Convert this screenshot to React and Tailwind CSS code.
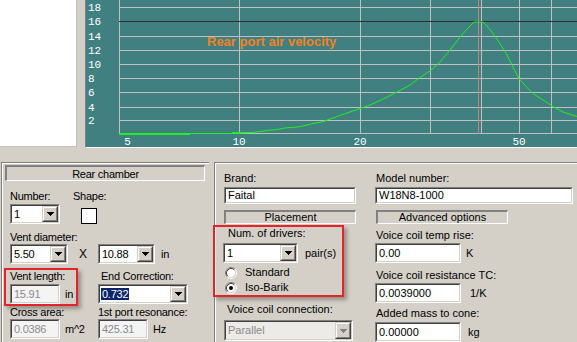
import React from 'react'

const hGrid = [7, 21, 36, 50, 64, 78, 92, 107, 120, 133]
const vGrid = [119, 239, 360, 430, 481, 519, 551]
const yLabels = ['18', '16', '14', '12', '10', '8', '6', '4', '2']
const xLabels = [['5', 127.5], ['10', 239], ['20', 360], ['50', 519]]
const curve =
  '119,133.5 232,133.5 252,132.5 267,130.5 277,129.5 285,128 297,127 303,126 313,123.5 322,122 330,119 340,115.5 350,112 360,108.5 370,105 380,100.5 390,95.5 400,90.5 410,85 420,77.5 430,71 440,62 450,50 460,37 470,26 474,22 483,22 487,26 493,33.5 500,43.5 507,55 513,67 519,78.5 527,87.5 533,93.5 543,100 552,106 563,112 577,116.5'

function Chart() {
  return (
    <svg width="491" height="147" className="block">
      <g transform="translate(-86 0)">
        {hGrid.map(y => (
          <line key={y} x1="119" x2="577" y1={y + 0.5} y2={y + 0.5} stroke="#c0c0c0" />
        ))}
        {vGrid.map(x => (
          <line key={x} x1={x + 0.5} x2={x + 0.5} y1="0" y2="134" stroke="#c0c0c0" />
        ))}
        <line x1="119" x2="577" y1="21.5" y2="21.5" stroke="#303030" />
        <rect x="478" y="0" width="1" height="134" fill="#c88080" />
        <line x1="119" x2="190" y1="134.5" y2="134.5" stroke="#22ee22" />
        <line x1="232" x2="252" y1="132.5" y2="132.5" stroke="#22ee22" />
        <polyline points={curve} fill="none" stroke="#22ee22" strokeWidth="1" />
        {yLabels.map((t, i) => (
          <text key={t} x="88" y={hGrid[i] + 4} fill="#fff" fontSize="11" fontFamily="'Liberation Mono', monospace">
            {t}
          </text>
        ))}
        {xLabels.map(([t, x]) => (
          <text key={t} x={x} y="145" fill="#fff" fontSize="11" textAnchor="middle" fontFamily="'Liberation Mono', monospace">
            {t}
          </text>
        ))}
        <text x="207" y="45.5" fill="#f58220" fontSize="13" fontWeight="bold" fontFamily="'Liberation Sans', Arial, sans-serif">
          Rear port air velocity
        </text>
      </g>
    </svg>
  )
}

function Label({ className = '', children }) {
  return <div className={`h-[13px] whitespace-nowrap text-[11px] leading-[13px] ${className}`}>{children}</div>
}

function Field({ className = '', value, disabled }) {
  return (
    <div className={`border border-t-[#808080] border-l-[#808080] border-r-white border-b-white ${className}`}>
      <div
        className={`flex h-full items-center border border-t-[#404040] border-l-[#404040] border-r-[#d4d0c8] border-b-[#d4d0c8] pl-[2px] text-[11px] leading-[13px] ${
          disabled ? 'bg-[#f4f4f4] text-[#8a8a8a]' : 'bg-white text-black'
        }`}
      >
        {value}
      </div>
    </div>
  )
}

function DropButton({ disabled }) {
  return (
    <div className="h-full w-[16px] border border-t-[#d4d0c8] border-l-[#d4d0c8] border-r-[#404040] border-b-[#404040] bg-[#d4d0c8]">
      <div className="flex h-full items-center justify-center border border-t-white border-l-white border-r-[#808080] border-b-[#808080]">
        <svg width="7" height="4" viewBox="0 0 7 4">
          <path d="M0 0H7V1H6V2H5V3H4V4H3V3H2V2H1V1H0Z" fill={disabled ? '#808080' : '#000'} />
        </svg>
      </div>
    </div>
  )
}

function Combo({ className = '', value, disabled, selected }) {
  return (
    <div className={`border border-t-[#808080] border-l-[#808080] border-r-white border-b-white ${className}`}>
      <div
        className={`flex h-full border border-t-[#404040] border-l-[#404040] border-r-[#d4d0c8] border-b-[#d4d0c8] ${
          disabled ? 'bg-[#ecebe8] text-[#8a8a8a]' : 'bg-white text-black'
        }`}
      >
        <div className="flex flex-1 items-center pl-[2px] text-[11px] leading-[13px]">
          {selected ? <span className="-ml-[1px] bg-[#0a246a] px-[1px] leading-[12px] text-white">{value}</span> : value}
        </div>
        <DropButton disabled={disabled} />
      </div>
    </div>
  )
}

function Bar({ className = '', children }) {
  return (
    <div className={`h-[14px] border-t-2 border-l-2 border-b border-r border-t-[#808080] border-l-[#808080] border-b-white border-r-white bg-[#d4d0c8] ${className}`}>
      <div className="flex justify-center whitespace-nowrap text-[11px] leading-[11px]">{children}</div>
    </div>
  )
}

function Radio({ checked }) {
  return (
    <svg width="12" height="12" viewBox="0 0 12 12" className="shrink-0">
      <circle cx="6" cy="6" r="4.5" fill="#fff" />
      <path d="M2.11 9.89A5.5 5.5 0 0 1 9.89 2.11" fill="none" stroke="#808080" />
      <path d="M9.89 2.11A5.5 5.5 0 0 1 2.11 9.89" fill="none" stroke="#fff" />
      <path d="M2.82 9.18A4.5 4.5 0 0 1 9.18 2.82" fill="none" stroke="#404040" />
      <path d="M9.18 2.82A4.5 4.5 0 0 1 2.82 9.18" fill="none" stroke="#d4d0c8" />
      {checked && <circle cx="6" cy="6" r="2" fill="#000" />}
    </svg>
  )
}

function RearChamber() {
  return (
    <div className="ml-[1px] w-[208px] border-t border-l border-[#808080]">
      <div className="h-[180px] border-t border-l border-white tracking-[-0.25px]">
        <div className="ml-[2px] mt-[1px] h-[16px] w-[200px] border-t-2 border-l-2 border-b border-r border-t-[#808080] border-l-[#808080] border-b-white border-r-white">
          <div className="flex justify-center pt-[2px] text-[11px] leading-[11px]">Rear chamber</div>
        </div>

        <div className="mt-[9px] flex">
          <div className="ml-[7px] w-[63px]">
            <Label>Number:</Label>
            <Combo className="mt-[1px] h-[20px] w-[50px]" value="1" />
          </div>
          <div>
            <Label>Shape:</Label>
            <div className="ml-[8px] mt-[5px] h-[16px] w-[16px] border border-black bg-white" />
          </div>
        </div>

        <Label className="ml-[7px] mt-[7px]">Vent diameter:</Label>
        <div className="ml-[7px] flex items-center">
          <Combo className="h-[20px] w-[58px]" value="5.50" />
          <span className="w-[30px] text-center text-[12px] font-light leading-[13px]">X</span>
          <Combo className="h-[20px] w-[57px]" value="10.88" />
          <span className="ml-[6px] text-[11px] leading-[13px]">in</span>
        </div>

        <div className="mt-[4px] flex">
          <div className="ml-[1px] h-[38px] w-[74px] border-2 border-[#e5242a] shadow-[3px_3px_4px_rgba(0,0,0,0.3)]">
            <Label className="ml-[4px]">Vent length:</Label>
            <div className="mt-[1px] flex items-center">
              <Field className="ml-[4px] h-[20px] w-[50px]" value="15.91" disabled />
              <span className="ml-[5px] text-[11px] leading-[13px]">in</span>
            </div>
          </div>
          <div className="ml-[20px] mt-[2px]">
            <Label className="ml-[3px]">End Correction:</Label>
            <Combo className="mt-[1px] h-[20px] w-[90px]" value="0.732" selected />
          </div>
        </div>

        <div className="flex">
          <div className="ml-[7px] w-[88px]">
            <Label>Cross area:</Label>
            <div className="flex items-center">
              <Field className="h-[20px] w-[50px]" value="0.0386" disabled />
              <span className="ml-[5px] text-[11px] leading-[13px]">m^2</span>
            </div>
          </div>
          <div>
            <Label>1st port resonance:</Label>
            <div className="flex items-center">
              <Field className="h-[20px] w-[50px]" value="425.31" disabled />
              <span className="ml-[5px] text-[11px] leading-[13px]">Hz</span>
            </div>
          </div>
        </div>
      </div>
    </div>
  )
}

function Driver() {
  return (
    <div className="ml-[5px] flex-1 border-t border-l border-[#808080]">
      <div className="flex h-[180px] border-t border-l border-white">
        <div className="w-[159px]">
          <Label className="ml-[8px] mt-[8px]">Brand:</Label>
          <Field className="ml-[8px] mt-[2px] h-[17px] w-[132px]" value="Faital" />
          <Bar className="ml-[8px] mt-[6px] w-[132px]">Placement</Bar>
          <div className="-ml-[3px] mt-[1px] h-[72px] w-[131px] border-2 border-[#e5242a] shadow-[3px_3px_4px_rgba(0,0,0,0.3)]">
            <div className="ml-[13px] h-[12px] whitespace-nowrap text-[11px] leading-[12px]">Num. of drivers:</div>
            <div className="ml-[8px] mt-[4px] flex items-center">
              <Combo className="h-[20px] w-[75px]" value="1" />
              <span className="ml-[7px] text-[11px] leading-[13px]">pair(s)</span>
            </div>
            <div className="ml-[10px] mt-[2px] flex h-[15px] items-center gap-[8px] text-[11px] leading-[13px]">
              <Radio />
              <span>Standard</span>
            </div>
            <div className="ml-[10px] flex h-[15px] items-center gap-[8px] text-[11px] leading-[13px]">
              <Radio checked />
              <span>Iso-Barik</span>
            </div>
          </div>
          <Label className="ml-[11px] mt-[6px]">Voice coil connection:</Label>
          <Combo className="ml-[8px] mt-[4px] h-[21px] w-[129px]" value="Parallel" disabled />
        </div>

        <div className="flex-1">
          <Label className="ml-[1px] mt-[8px]">Model number:</Label>
          <Field className="mt-[2px] h-[17px] w-[198px]" value="W18N8-1000" />
          <Bar className="ml-[1px] mt-[6px] w-[132px]">Advanced options</Bar>
          <Label className="ml-[1px] mt-[5px]">Voice coil temp rise:</Label>
          <div className="mt-[1px] flex items-center">
            <Field className="h-[20px] w-[86px]" value="0.00" />
            <span className="ml-[5px] text-[11px] leading-[13px]">K</span>
          </div>
          <Label className="ml-[1px] mt-[6px]">Voice coil resistance TC:</Label>
          <div className="mt-[1px] flex items-center">
            <Field className="h-[20px] w-[86px]" value="0.0039000" />
            <span className="ml-[9px] text-[11px] leading-[13px]">1/K</span>
          </div>
          <Label className="ml-[1px] mt-[4px]">Added mass to cone:</Label>
          <div className="mt-[2px] flex items-center">
            <Field className="h-[20px] w-[86px]" value="0.00000" />
            <span className="ml-[7px] text-[11px] leading-[13px]">kg</span>
          </div>
        </div>
      </div>
    </div>
  )
}

export default function App() {
  return (
    <div className="h-[342px] w-[577px] overflow-hidden bg-[#d4d0c8] font-['Liberation_Sans',Arial,sans-serif] text-black">
      <div className="flex h-[148px]">
        <div className="h-[147px] w-[77px] border-r border-b border-[#c0c0c0] bg-white" />
        <div className="ml-[8px] flex-1 border-l border-b border-l-[#808080] border-b-white bg-[#408080]">
          <Chart />
        </div>
      </div>
      <div className="flex pt-[14px]">
        <RearChamber />
        <Driver />
      </div>
    </div>
  )
}
